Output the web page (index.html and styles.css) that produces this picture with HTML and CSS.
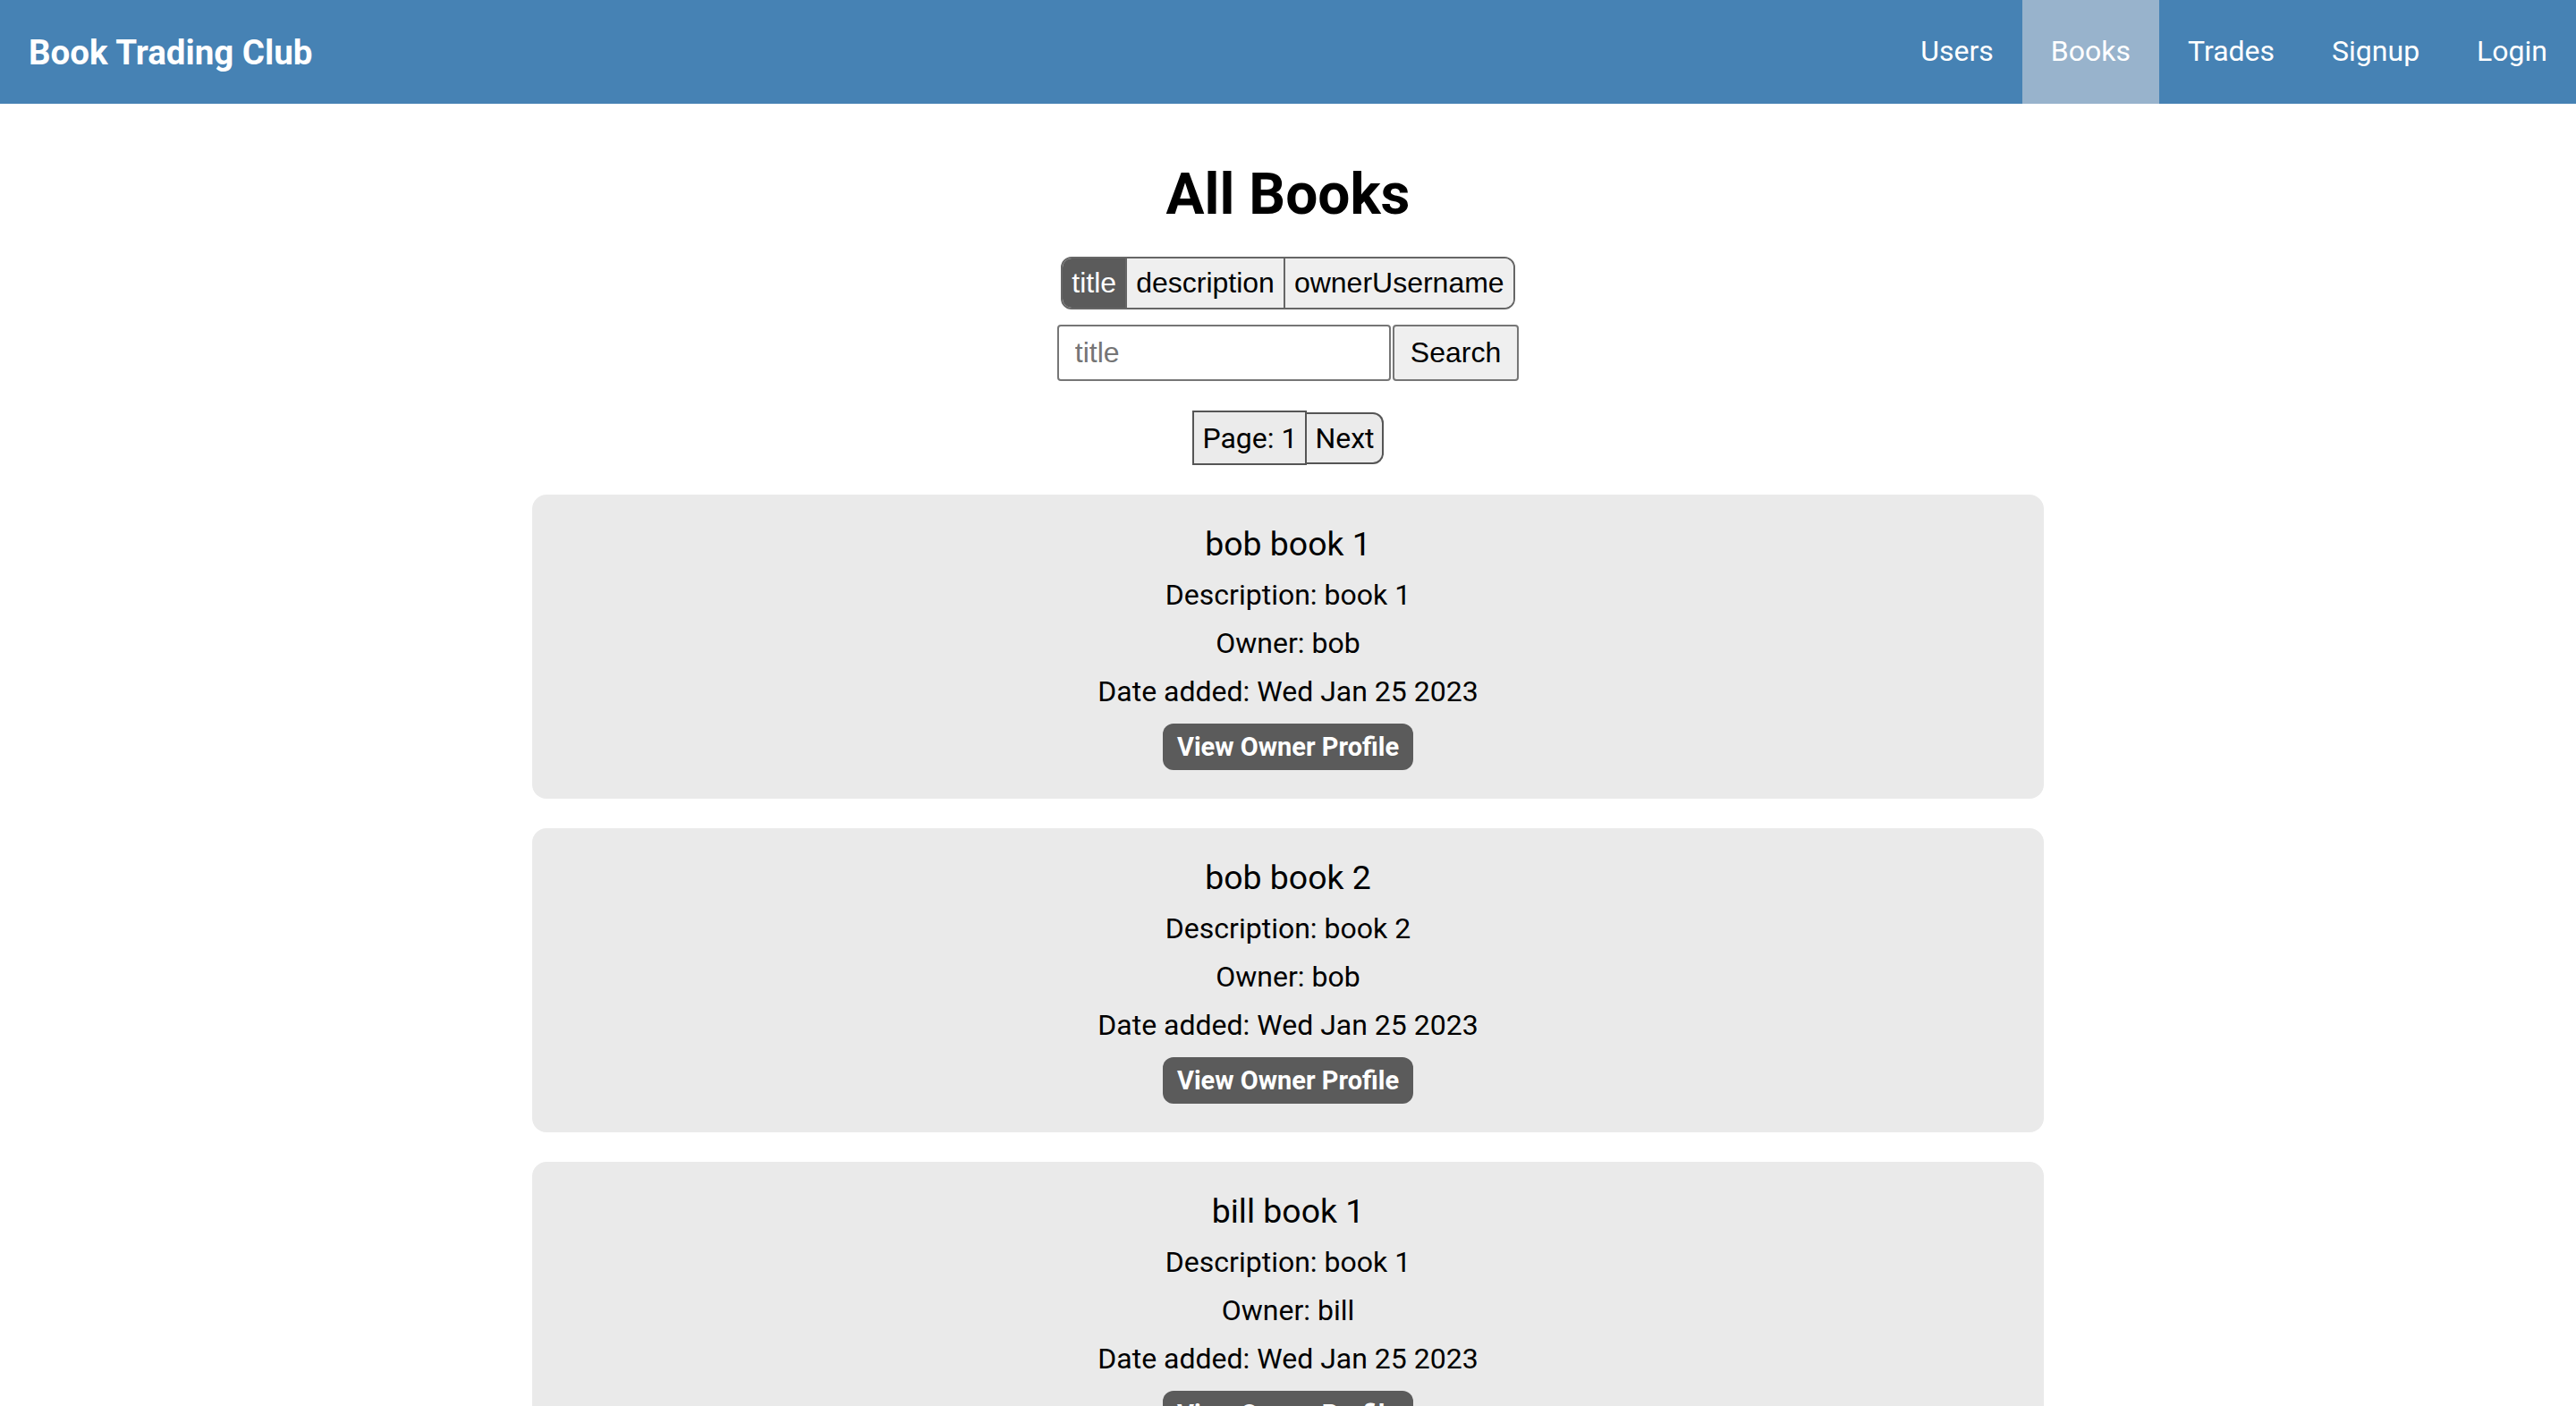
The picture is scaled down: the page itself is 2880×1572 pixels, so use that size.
FILE: index.html
```html
<!DOCTYPE html>
<html lang="en">
<head>
<meta charset="utf-8">
<title>Book Trading Club</title>
<link rel="stylesheet" href="styles.css">
</head>
<body>
<nav class="navbar">
  <a class="brand" href="#">Book Trading Club</a>
  <ul class="nav-links">
    <li><a href="#">Users</a></li>
    <li><a class="active" href="#">Books</a></li>
    <li><a href="#">Trades</a></li>
    <li><a href="#">Signup</a></li>
    <li><a href="#">Login</a></li>
  </ul>
</nav>
<main class="main">
  <h1 class="page-title">All Books</h1>
  <div class="filter-group">
    <button class="filter-btn selected">title</button>
    <button class="filter-btn">description</button>
    <button class="filter-btn">ownerUsername</button>
  </div>
  <form class="search-row">
    <input class="search-input" type="text" placeholder="title">
    <button class="search-btn" type="button">Search</button>
  </form>
  <div class="pagination">
    <span class="page-label">Page: 1</span>
    <button class="next-btn">Next</button>
  </div>
  <section class="book-list">
    <article class="book-card">
      <h3 class="book-title">bob book 1</h3>
      <p class="book-line">Description: book 1</p>
      <p class="book-line">Owner: bob</p>
      <p class="book-line">Date added: Wed Jan 25 2023</p>
      <a class="profile-btn" href="#">View Owner Profile</a>
    </article>
    <article class="book-card">
      <h3 class="book-title">bob book 2</h3>
      <p class="book-line">Description: book 2</p>
      <p class="book-line">Owner: bob</p>
      <p class="book-line">Date added: Wed Jan 25 2023</p>
      <a class="profile-btn" href="#">View Owner Profile</a>
    </article>
    <article class="book-card">
      <h3 class="book-title">bill book 1</h3>
      <p class="book-line">Description: book 1</p>
      <p class="book-line">Owner: bill</p>
      <p class="book-line">Date added: Wed Jan 25 2023</p>
      <a class="profile-btn" href="#">View Owner Profile</a>
    </article>
  </section>
</main>
</body>
</html>
```
FILE: styles.css
```css
* { box-sizing: border-box; }

body {
  margin: 0;
  font-family: Roboto, "Liberation Sans", sans-serif;
  font-size: 32px;
  color: #000;
  background: #fff;
}

.navbar {
  display: flex;
  justify-content: space-between;
  align-items: stretch;
  height: 116px;
  background: #4682b4;
}

.brand {
  display: flex;
  align-items: center;
  padding-left: 32px;
  font-size: 38.5px;
  font-weight: 700;
  color: #fff;
  text-decoration: none;
}

.nav-links {
  display: flex;
  margin: 0;
  padding: 0;
  list-style: none;
}

.nav-links li { display: flex; }

.nav-links a {
  display: flex;
  align-items: center;
  padding: 0 32px 2px;
  color: #fff;
  text-decoration: none;
  font-size: 32px;
}

.nav-links a.active { background: #98b3cc; }

.main {
  display: flex;
  flex-direction: column;
  align-items: center;
}

.page-title {
  margin: 64px 0 32px;
  font-size: 64px;
  font-weight: 700;
}

.filter-group {
  display: flex;
  border: 2px solid #666;
  border-radius: 12px;
  overflow: hidden;
}

.filter-btn {
  margin: 0;
  padding: 9px 10px;
  border: none;
  border-left: 2px solid #666;
  background: #efefef;
  color: #000;
  font-family: "Liberation Sans", Arial, sans-serif;
  font-size: 32px;
  line-height: normal;
}

.filter-btn:first-child { border-left: none; }

.filter-btn.selected {
  background: #5b5b5b;
  color: #fff;
}

.search-row {
  display: flex;
  gap: 2px;
  margin: 17px 0 0;
}

.search-input {
  width: 373px;
  height: 63px;
  padding: 0 18px;
  border: 2px solid #767676;
  border-radius: 4px;
  font-family: "Liberation Sans", Arial, sans-serif;
  font-size: 32px;
  background: #fff;
}

.search-input::placeholder { color: #757575; }

.search-btn {
  height: 63px;
  padding: 0 18px;
  border: 2px solid #767676;
  border-radius: 4px;
  background: #efefef;
  font-family: "Liberation Sans", Arial, sans-serif;
  font-size: 32px;
  color: #000;
}

.pagination {
  display: flex;
  align-items: center;
  margin-top: 33px;
}

.page-label {
  padding: 10px 9px 9px;
  border: 2px solid #555;
  background: #ebebeb;
  font-size: 32px;
  line-height: 38px;
}

.next-btn {
  margin: 0;
  padding: 8px 8px 8px 9px;
  border: 2px solid #555;
  border-left: none;
  border-radius: 0 12px 12px 0;
  background: #ebebeb;
  font-family: Roboto, "Liberation Sans", sans-serif;
  font-size: 32px;
  line-height: 38px;
  color: #000;
}

.book-list {
  display: flex;
  flex-direction: column;
  gap: 33px;
  width: 1690px;
  margin-top: 33px;
}

.book-card {
  display: flex;
  flex-direction: column;
  align-items: center;
  gap: 16px;
  padding: 33px 16px 32px;
  background: #eaeaea;
  border-radius: 16px;
}

.book-title {
  margin: 0;
  font-size: 37.44px;
  font-weight: 400;
}

.book-line {
  margin: 0;
  font-size: 32px;
}

.profile-btn {
  margin-top: 1px;
  padding: 9px 16px;
  background: #5b5b5b;
  color: #fff;
  border-radius: 12px;
  font-size: 29px;
  font-weight: 700;
  text-decoration: none;
}
```
